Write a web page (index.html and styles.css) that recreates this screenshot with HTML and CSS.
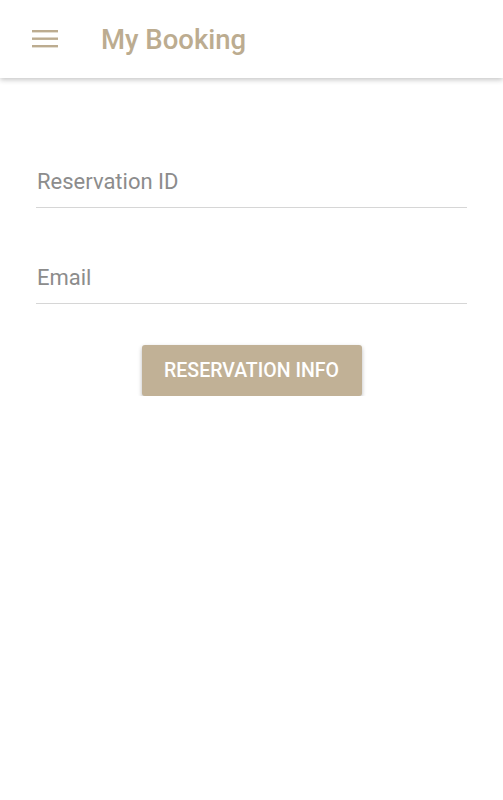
FILE: index.html
```html
<!DOCTYPE html>
<html lang="en">
<head>
    <meta charset="UTF-8">
    <meta name="viewport" content="width=device-width, initial-scale=1.0">
    <title>My Booking</title>
    <link rel="stylesheet" href="styles.css">
</head>
<body>

<header class="toolbar">
    <button class="menu-button" aria-label="Menu">
        <svg width="26" height="18" viewBox="0 0 26 18">
            <rect x="0" y="0" width="26" height="2.4" fill="#bcac90"/>
            <rect x="0" y="7.5" width="26" height="2.4" fill="#bcac90"/>
            <rect x="0" y="15" width="26" height="2.4" fill="#bcac90"/>
        </svg>
    </button>
    <h1 class="title">My Booking</h1>
</header>

<main class="content">
    <form class="booking-form">
        <div class="field">
            <input type="text" placeholder="Reservation ID">
        </div>
        <div class="field">
            <input type="email" placeholder="Email">
        </div>
        <button type="submit" class="submit-button">Reservation Info</button>
    </form>
</main>

</body>
</html>
```

FILE: styles.css
```css
body { font-family: Roboto, "Liberation Sans", sans-serif; background-color: #ffffff; margin: 0; }
.toolbar { height: 78px; display: flex; align-items: center; background-color: #ffffff; box-shadow: 0 2px 5px rgba(0,0,0,0.22); }
.menu-button { width: 26px; height: 18px; margin-left: 32px; padding: 0; border: none; background: transparent; display: flex; }
.title { margin: 0 0 0 43px; font-size: 27.5px; font-weight: 500; color: #bcac90; }
.content { padding: 0 36px 0 36px; }
.booking-form { display: flex; flex-direction: column; padding-top: 91px; }
.field { margin-bottom: 57px; }
.field:last-of-type { margin-bottom: 41px; }
.field input { width: 100%; box-sizing: border-box; border: none; border-bottom: 1px solid #d6d6d6; padding: 0 0 13px 1px; font-family: Roboto, "Liberation Sans", sans-serif; font-size: 22px; color: #333; outline: none; background: transparent; }
.field input::placeholder { color: #8c8c8c; }
.submit-button { align-self: center; width: 220px; height: 51px; border: none; border-radius: 3px; background-color: #c1b196; color: #ffffff; font-family: Roboto, "Liberation Sans", sans-serif; font-size: 19.5px; font-weight: 500; text-transform: uppercase; box-shadow: 0 2px 4px rgba(0,0,0,0.28); cursor: pointer; }
```
